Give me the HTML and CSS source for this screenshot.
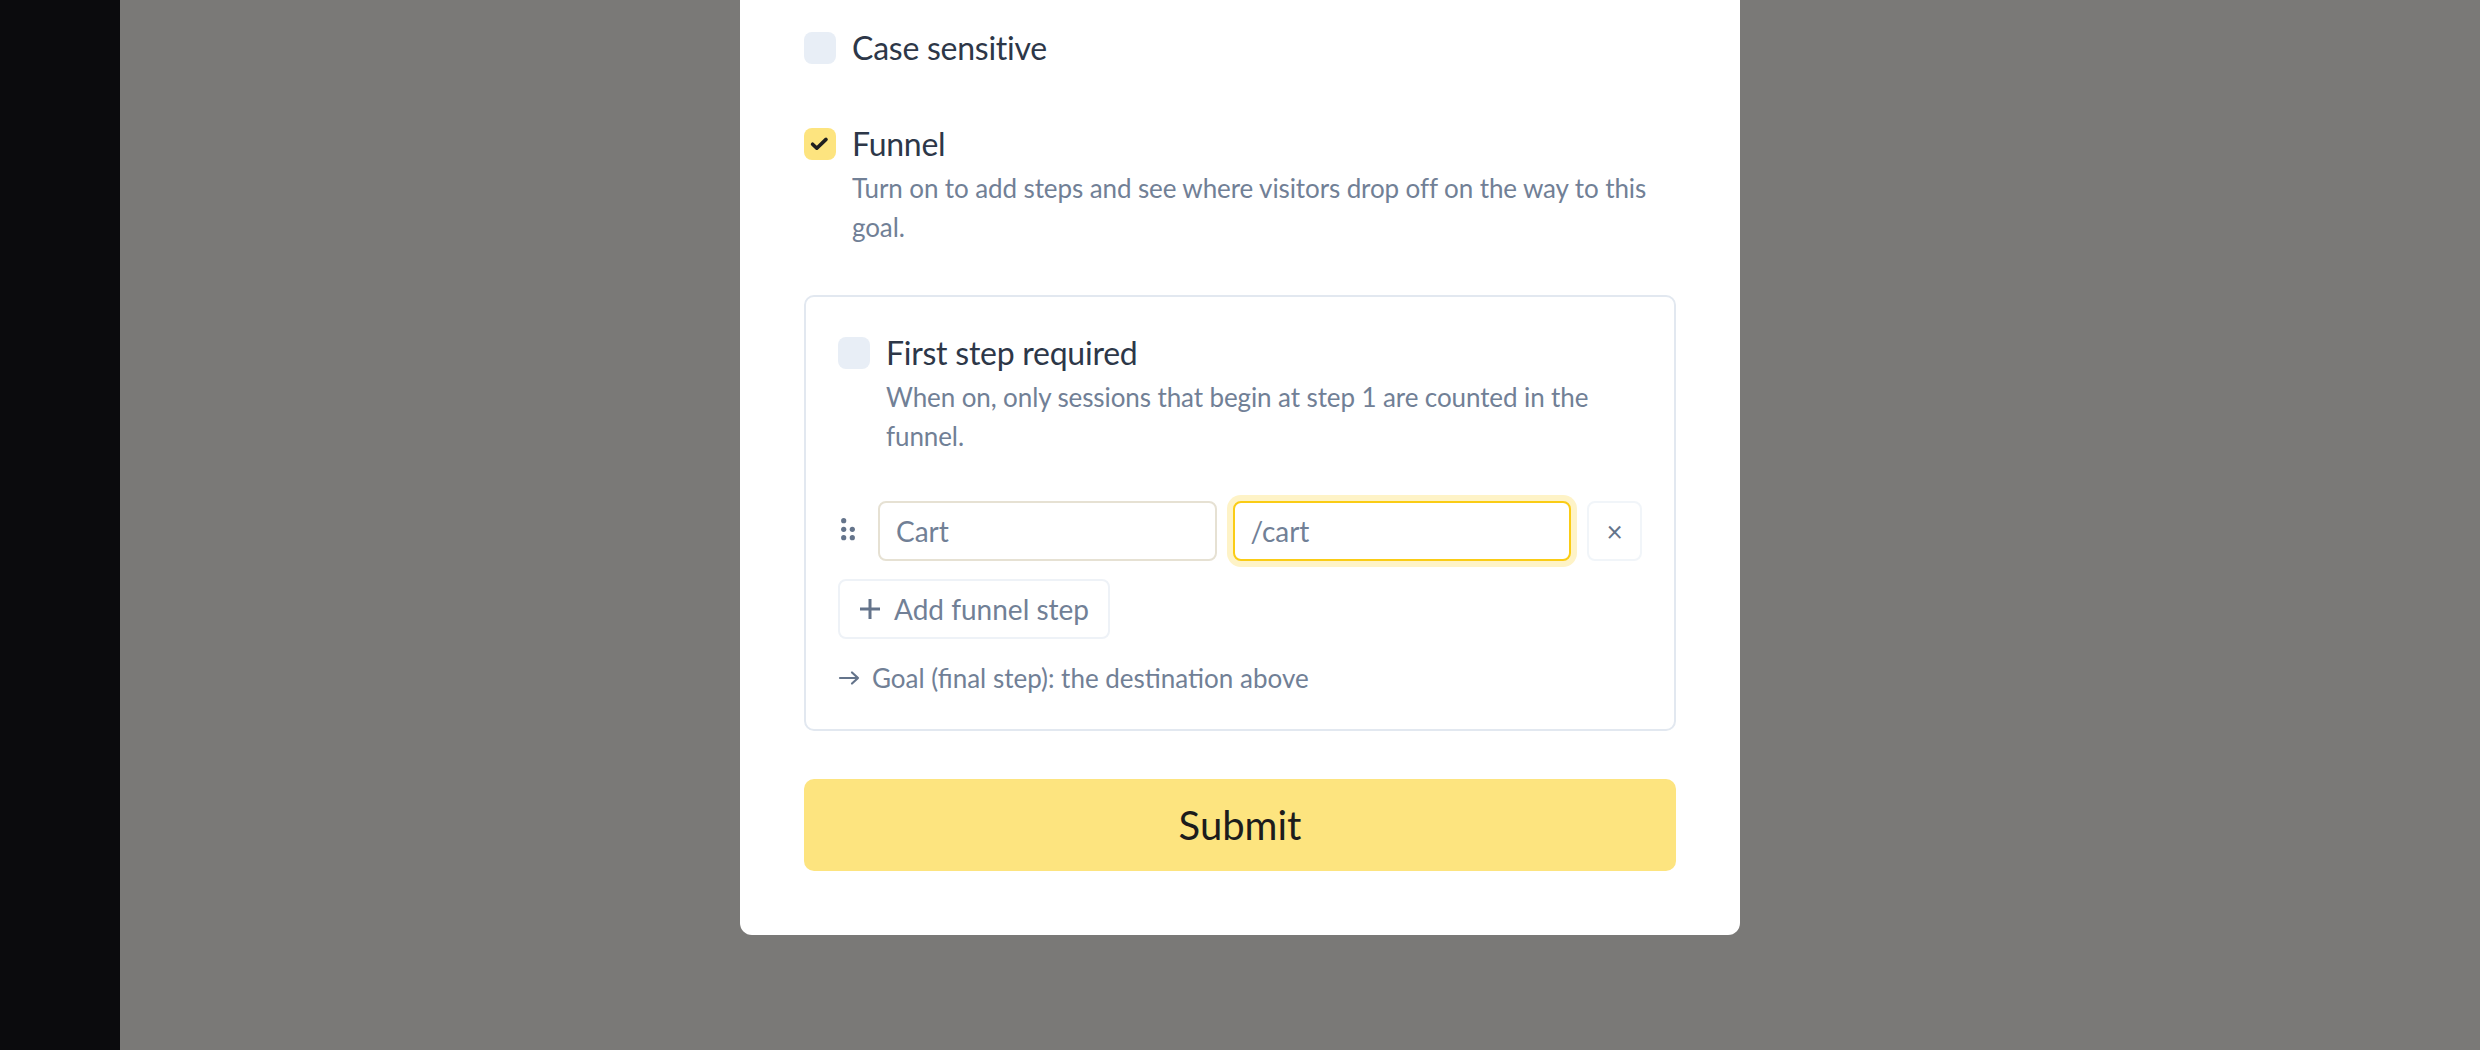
FILE: index.html
```html
<!DOCTYPE html>
<html lang="en">
<head>
<meta charset="utf-8">
<title>Goal settings</title>
<link rel="stylesheet" href="styles.css">
</head>
<body>
<div class="app">
  <aside class="sidebar"></aside>
  <main class="page"></main>
</div>
<div class="backdrop"></div>
<div class="modal-layer">
  <form class="modal">
    <div class="option">
      <span class="check"></span>
      <div class="option-text">
        <div class="option-label">Case sensitive</div>
      </div>
    </div>

    <div class="option">
      <span class="check is-on">
        <svg class="check-mark" width="32" height="32" viewBox="0 0 32 32"><path d="M8.6 16.2 L12.8 20.2 L22 11.4" fill="none" stroke="#1f1f1f" stroke-width="3.6" stroke-linecap="round" stroke-linejoin="round"/></svg>
      </span>
      <div class="option-text">
        <div class="option-label">Funnel</div>
        <p class="option-desc">Turn on to add steps and see where visitors drop off on the way to this goal.</p>
      </div>
    </div>

    <div class="funnel-box">
      <div class="option">
        <span class="check"></span>
        <div class="option-text">
          <div class="option-label">First step required</div>
          <p class="option-desc">When on, only sessions that begin at step 1 are counted in the funnel.</p>
        </div>
      </div>

      <div class="step-row">
        <span class="grip">
          <svg width="24" height="30" viewBox="0 0 24 30"><g fill="#64748b"><circle cx="5.7" cy="4.7" r="2.6"/><circle cx="5.7" cy="13.3" r="2.6"/><circle cx="14.3" cy="13.3" r="2.6"/><circle cx="5.7" cy="21.7" r="2.6"/><circle cx="14.3" cy="21.7" r="2.6"/></g></svg>
        </span>
        <input class="step-input" type="text" value="Cart">
        <input class="step-input is-focused" type="text" value="/cart">
        <button class="remove-step" type="button">×</button>
      </div>

      <button class="add-step" type="button">
        <svg width="24" height="24" viewBox="0 0 24 24"><path d="M11 2 V22 M1 12 H21" stroke="#64748b" stroke-width="3" fill="none"/></svg>
        <span>Add funnel step</span>
      </button>

      <div class="goal-note">
        <svg width="22" height="16" viewBox="0 0 22 16"><path d="M2 8 H20 M14 2.5 L20 8 L14 13.5" stroke="#64748b" stroke-width="2.2" fill="none" stroke-linecap="round" stroke-linejoin="round"/></svg>
        <span>Goal (final step): the destination above</span>
      </div>
    </div>

    <button class="submit" type="button">Submit</button>
  </form>
</div>
</body>
</html>
```

FILE: styles.css
```css
* { box-sizing: border-box; }

html, body {
  margin: 0;
  height: 100%;
}

body {
  font-family: Lato, "Liberation Sans", sans-serif;
  background: #7a7977;
  overflow: hidden;
}

.app {
  display: flex;
  height: 1050px;
}

.sidebar {
  width: 120px;
  flex: none;
  background: #0b0b0d;
}

.page {
  flex: 1;
}

.backdrop {
  position: fixed;
  top: 0;
  bottom: 0;
  left: 120px;
  right: 0;
  background: #7a7977;
}

.modal-layer {
  position: fixed;
  inset: 0;
  display: flex;
  justify-content: center;
  align-items: flex-start;
}

.modal {
  width: 1000px;
  background: #ffffff;
  border-radius: 0 0 12px 12px;
  padding: 24px 64px 64px;
  display: flex;
  flex-direction: column;
  gap: 48px;
}

.option {
  display: grid;
  grid-template-columns: 32px 1fr;
  column-gap: 16px;
}

.check {
  width: 32px;
  height: 32px;
  margin-top: 8px;
  border-radius: 8px;
  background: #e8eef6;
  display: flex;
}

.check.is-on {
  background: #fde47f;
}

.option-label {
  font-size: 32px;
  letter-spacing: -0.25px;
  line-height: 48px;
  color: #2d3748;
}

.option-desc {
  margin: 1px 0 0;
  font-size: 26px;
  letter-spacing: -0.1px;
  line-height: 39px;
  color: #718096;
}

.funnel-box {
  border: 2px solid #e2e8f0;
  border-radius: 10px;
  padding: 32px 32px 33px;
  display: flex;
  flex-direction: column;
}

.step-row {
  display: flex;
  align-items: center;
  gap: 16px;
  margin-top: 45px;
}

.grip {
  width: 24px;
  flex: none;
  display: flex;
}

.step-input {
  flex: 1;
  min-width: 0;
  height: 60px;
  border: 2px solid #e6e1d3;
  border-radius: 8px;
  padding: 0 16px;
  font-family: Lato, "Liberation Sans", sans-serif;
  font-size: 28px;
  color: #718096;
  background: #ffffff;
  outline: none;
}

.step-input.is-focused {
  border-color: #facc15;
  box-shadow: 0 0 0 6px #fef3c7;
}

.remove-step {
  width: 55px;
  height: 60px;
  flex: none;
  padding: 0;
  border: 2px solid #f1f5f9;
  border-radius: 8px;
  background: #ffffff;
  color: #64748b;
  font-family: Lato, "Liberation Sans", sans-serif;
  font-size: 28px;
}

.add-step {
  align-self: flex-start;
  margin-top: 18px;
  height: 60px;
  display: flex;
  align-items: center;
  gap: 11px;
  padding: 0 19px 0 19px;
  border: 2px solid #eef2f7;
  border-radius: 8px;
  background: #ffffff;
  color: #718096;
  font-family: Lato, "Liberation Sans", sans-serif;
  font-size: 28px;
}

.goal-note {
  margin-top: 21px;
  display: flex;
  align-items: center;
  gap: 12px;
  font-size: 26px;
  line-height: 36px;
  color: #718096;
}

.submit {
  height: 92px;
  border: 0;
  border-radius: 10px;
  background: #fde47f;
  color: #1c1c1c;
  font-family: Lato, "Liberation Sans", sans-serif;
  font-size: 40px;
}
```
